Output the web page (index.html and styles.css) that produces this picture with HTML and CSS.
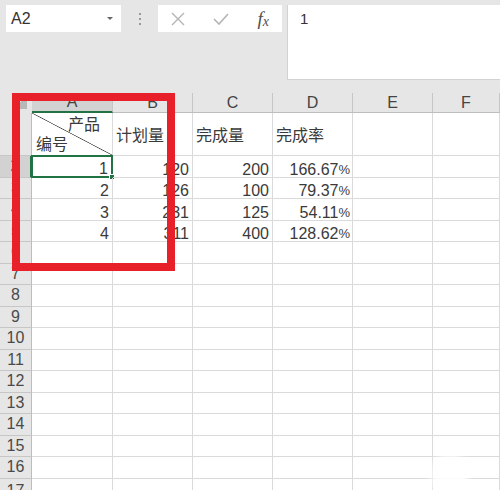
FILE: index.html
```html
<!DOCTYPE html>
<html>

<head>
  <meta charset="UTF-8">
  <title>工作表</title>
  <link rel="stylesheet" href="styles.css">
</head>

<body>
  <div class="toolbar">
    <div class="namebox">
      <span>A2</span>
      <span class="caret"></span>
    </div>
    <div class="grip"><i></i><i></i><i></i></div>
    <div class="fx-btns">
      <svg class="btn" width="14" height="14" viewBox="0 0 14 14">
        <path d="M1 1 L13 13 M13 1 L1 13" stroke="#b4b4b4" stroke-width="1.4" fill="none" />
      </svg>
      <svg class="btn" width="16" height="12" viewBox="0 0 16 12">
        <path d="M1 6 L6 11 L15 1" stroke="#b4b4b4" stroke-width="1.6" fill="none" />
      </svg>
      <span class="fx">f<sub>x</sub></span>
    </div>
    <div class="formula">1</div>
  </div>

  <div class="sheet">
    <div class="grid">
      <!-- 列标题 -->
      <div class="corner"></div>
      <div class="ch sel">A</div>
      <div class="ch">B</div>
      <div class="ch">C</div>
      <div class="ch">D</div>
      <div class="ch">E</div>
      <div class="ch">F</div>

      <div class="rh">1</div>
      <div class="c diag">
        <span class="d-top">产品</span>
        <span class="d-bottom">编号</span>
      </div>
      <div class="c txt">计划量</div>
      <div class="c txt">完成量</div>
      <div class="c txt">完成率</div>
      <div class="c"></div>
      <div class="c"></div>

      <div class="rh sel">2</div>
      <div class="c num active">1<span class="handle"></span></div>
      <div class="c num">120</div>
      <div class="c num">200</div>
      <div class="c num">166.67<small>%</small></div>
      <div class="c"></div>
      <div class="c"></div>

      <div class="rh">3</div>
      <div class="c num">2</div>
      <div class="c num">126</div>
      <div class="c num">100</div>
      <div class="c num">79.37<small>%</small></div>
      <div class="c"></div>
      <div class="c"></div>

      <div class="rh">4</div>
      <div class="c num">3</div>
      <div class="c num">231</div>
      <div class="c num">125</div>
      <div class="c num">54.11<small>%</small></div>
      <div class="c"></div>
      <div class="c"></div>

      <div class="rh">5</div>
      <div class="c num">4</div>
      <div class="c num">311</div>
      <div class="c num">400</div>
      <div class="c num">128.62<small>%</small></div>
      <div class="c"></div>
      <div class="c"></div>

      <div class="rh">6</div>
      <div class="c"></div><div class="c"></div><div class="c"></div><div class="c"></div><div class="c"></div><div class="c"></div>
      <div class="rh">7</div>
      <div class="c"></div><div class="c"></div><div class="c"></div><div class="c"></div><div class="c"></div><div class="c"></div>
      <div class="rh">8</div>
      <div class="c"></div><div class="c"></div><div class="c"></div><div class="c"></div><div class="c"></div><div class="c"></div>
      <div class="rh">9</div>
      <div class="c"></div><div class="c"></div><div class="c"></div><div class="c"></div><div class="c"></div><div class="c"></div>
      <div class="rh">10</div>
      <div class="c"></div><div class="c"></div><div class="c"></div><div class="c"></div><div class="c"></div><div class="c"></div>
      <div class="rh">11</div>
      <div class="c"></div><div class="c"></div><div class="c"></div><div class="c"></div><div class="c"></div><div class="c"></div>
      <div class="rh">12</div>
      <div class="c"></div><div class="c"></div><div class="c"></div><div class="c"></div><div class="c"></div><div class="c"></div>
      <div class="rh">13</div>
      <div class="c"></div><div class="c"></div><div class="c"></div><div class="c"></div><div class="c"></div><div class="c"></div>
      <div class="rh">14</div>
      <div class="c"></div><div class="c"></div><div class="c"></div><div class="c"></div><div class="c"></div><div class="c"></div>
      <div class="rh">15</div>
      <div class="c"></div><div class="c"></div><div class="c"></div><div class="c"></div><div class="c"></div><div class="c"></div>
      <div class="rh">16</div>
      <div class="c"></div><div class="c"></div><div class="c"></div><div class="c"></div><div class="c"></div><div class="c"></div>
      <div class="rh last">17</div>
      <div class="c"></div><div class="c"></div><div class="c"></div><div class="c"></div><div class="c"></div><div class="c"></div>
    </div>

    <!-- 红色标注框 -->
    <div class="mark"></div>
    <!-- 右下角水印 -->
    <div class="watermark"></div>
  </div>
</body>

</html>
```

FILE: styles.css
```css
* {
  margin: 0;
  padding: 0;
  box-sizing: border-box;
}

body {
  font-family: "Liberation Sans", "Noto Sans CJK SC", sans-serif;
  background: #e6e6e6;
  color: #3a3a3a;
  width: 500px;
  height: 490px;
  overflow: hidden;
}

/* 编辑栏 */
.toolbar {
  height: 93px;
  display: flex;
  align-items: flex-start;
  padding: 5px 0 0 6px;
}

.namebox {
  width: 115px;
  height: 27px;
  background: white;
  display: flex;
  align-items: center;
  justify-content: space-between;
  padding: 0 8px 0 5px;
  font-size: 16px;
  color: #333;
}

.caret {
  width: 0;
  height: 0;
  border-left: 3px solid transparent;
  border-right: 3px solid transparent;
  border-top: 3px solid #666;
}

.grip {
  width: 37px;
  height: 27px;
  display: flex;
  flex-direction: column;
  align-items: center;
  justify-content: center;
  gap: 3px;
}

.grip i {
  width: 2px;
  height: 2px;
  background: #9a9a9a;
}

.fx-btns {
  width: 124px;
  height: 27px;
  background: white;
  display: flex;
  align-items: center;
  padding: 0 13px 0 13px;
  justify-content: space-between;
}

.fx {
  font-family: "Liberation Serif", serif;
  font-style: italic;
  font-size: 19px;
  color: #505050;
  line-height: 1;
}

.fx sub {
  font-size: 14px;
  vertical-align: -1px;
}

.formula {
  margin-left: 5px;
  flex: 1;
  height: 75px;
  background: white;
  border-left: 1px solid #d2d2d2;
  border-bottom: 1px solid #d2d2d2;
  padding: 5px 0 0 12px;
  font-size: 15px;
  color: #333;
}

/* 表格区 */
.sheet {
  position: relative;
  background: white;
}

.grid {
  display: grid;
  grid-template-columns: 32px 81px 80px 80px 80px 80px 67px;
  grid-template-rows: 20px 43px repeat(16, 21.5px);
}

.corner {
  background: linear-gradient(135deg, #e6e6e6 62%, #b8b8b8 62%);
  border: 4px solid #e6e6e6;
  border-right-width: 5px;
}

.ch {
  background: #e6e6e6;
  border-right: 1px solid #c6c6c6;
  border-bottom: 1px solid #bdbdbd;
  font-size: 16px;
  color: #444;
  display: flex;
  align-items: center;
  justify-content: center;
}

.ch.sel {
  background: #d2d2d2;
  border-bottom: 2px solid #217346;
}

.rh {
  background: #e6e6e6;
  border-right: 1px solid #bdbdbd;
  border-bottom: 1px solid #c6c6c6;
  font-size: 16px;
  color: #4a4a4a;
  display: flex;
  align-items: center;
  justify-content: center;
}

.rh.last {
  align-items: flex-start;
  padding-top: 3px;
}

.rh.sel {
  background: #d2d2d2;
  border-right: 2px solid #217346;
}

.c {
  border-right: 1px solid #dadada;
  border-bottom: 1px solid #dadada;
  position: relative;
  font-size: 16px;
  color: #3a3a3a;
}

.txt {
  display: flex;
  align-items: center;
  padding-left: 3px;
}

.num {
  display: flex;
  align-items: flex-end;
  justify-content: flex-end;
  line-height: 14px;
  padding: 0 3px 0 0;
}

.num small {
  font-size: 13px;
  letter-spacing: -1px;
}

/* 斜线表头 */
.diag {
  background: linear-gradient(to top right, transparent calc(50% - 0.7px), #444 50%, transparent calc(50% + 0.7px));
  display: flex;
  flex-direction: column;
  justify-content: space-between;
  padding: 2px 12px 1px 4px;
}

.d-top {
  align-self: flex-end;
  line-height: 20px;
}

.d-bottom {
  align-self: flex-start;
  line-height: 20px;
}

.active {
  border: 2px solid #217346;
  margin: -1px 0 0 -1px;
}

.handle {
  position: absolute;
  right: -4px;
  bottom: -4px;
  width: 6px;
  height: 6px;
  background: #217346;
  border: 1px solid white;
}

.mark {
  position: absolute;
  left: 12px;
  top: 0;
  width: 163px;
  height: 178px;
  border: 8px solid #e8202a;
}

.watermark {
  position: absolute;
  left: 432px;
  top: 362px;
  width: 36px;
  height: 40px;
  background: white;
  border-radius: 40% 40% 30% 30%;
  filter: blur(3px);
  opacity: 0.9;
}
```
